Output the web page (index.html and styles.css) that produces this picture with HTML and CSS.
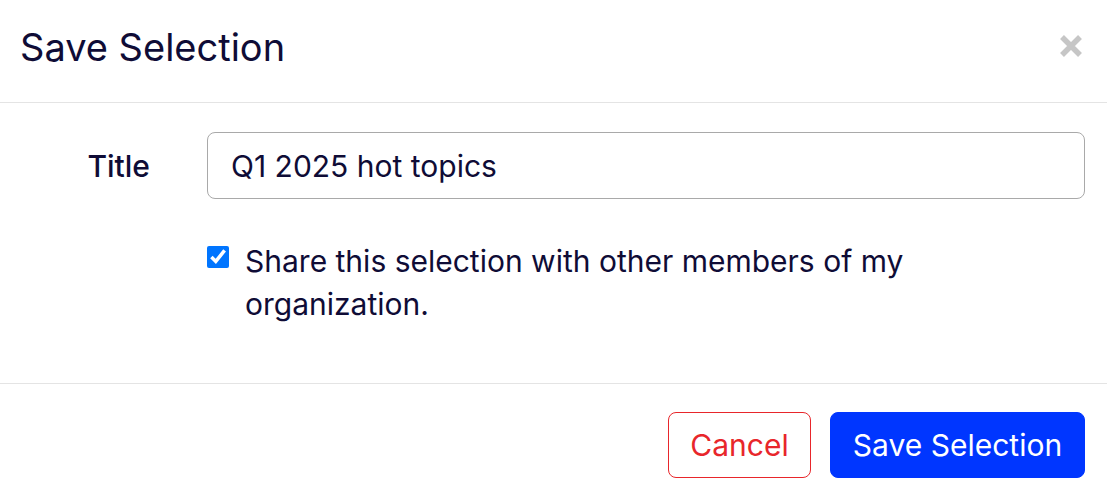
FILE: index.html
```html
<!DOCTYPE html>
<html>
<head>
<meta charset="utf-8">
<link rel="stylesheet" href="styles.css">
</head>
<body>
<div class="modal">
  <div class="modal-header">
    <h4 class="modal-title">Save Selection</h4>
    <button class="close" aria-label="Close">
      <svg width="24" height="24" viewBox="0 0 24 24"><path d="M3 3 L21 21 M21 3 L3 21" stroke="#c6c6c6" stroke-width="5.5" fill="none"/></svg>
    </button>
  </div>
  <div class="modal-body">
    <div class="form-row">
      <label class="form-label">Title</label>
      <input class="form-input" type="text" value="Q1 2025 hot topics">
    </div>
    <div class="check-row">
      <input class="check" type="checkbox" checked>
      <span class="check-label">Share this selection with other members of my organization.</span>
    </div>
  </div>
  <div class="modal-footer">
    <button class="btn btn-cancel">Cancel</button>
    <button class="btn btn-primary">Save Selection</button>
  </div>
</div>
</body>
</html>
```
FILE: styles.css
```css
html, body {
  margin: 0;
  padding: 0;
  background: #fff;
}
body {
  font-family: Inter, "Noto Sans", sans-serif;
  color: #0f0c36;
}
.modal {
  width: 1107px;
  height: 494px;
  overflow: hidden;
  display: flex;
  flex-direction: column;
}
.modal-header {
  height: 103px;
  border-bottom: 1px solid #e4e4e4;
  display: flex;
  align-items: center;
  justify-content: space-between;
  padding: 0 24px 0 20px;
  box-sizing: border-box;
}
.modal-title {
  margin: 0 0 8px 0;
  font-size: 38px;
  font-weight: 400;
  line-height: 1;
}
.close {
  background: none;
  border: 0;
  padding: 0;
  margin-bottom: 10px;
  display: flex;
}
.modal-body {
  padding: 29px 22px 57px 22px;
  border-bottom: 1px solid #e4e4e4;
}
.form-row {
  display: grid;
  grid-template-columns: 185px 1fr;
  align-items: center;
}
.form-label {
  text-align: right;
  padding-right: 57px;
  font-size: 30px;
  font-weight: 500;
}
.form-input {
  height: 67px;
  box-sizing: border-box;
  border: 1px solid #a9a9a9;
  border-radius: 8px;
  padding: 0 23px;
  font-family: inherit;
  font-size: 30px;
  color: #0f0c36;
  outline: none;
}
.check-row {
  display: flex;
  align-items: flex-start;
  margin: 41px 0 0 185px;
}
.check {
  width: 22px;
  height: 22px;
  margin: 6px 16px 0 0;
  flex: none;
}
.check-label {
  font-size: 30px;
  line-height: 43px;
  max-width: 700px;
}
.modal-footer {
  display: flex;
  justify-content: flex-end;
  gap: 19px;
  padding: 28px 22px 0 22px;
}
.btn {
  height: 66px;
  border-radius: 8px;
  font-family: inherit;
  font-size: 30px;
  padding: 0;
  cursor: pointer;
}
.btn-cancel {
  background: #fff;
  border: 1px solid #e8262b;
  color: #e8262b;
  width: 143px;
}
.btn-primary {
  background: #0036ff;
  border: 1px solid #0036ff;
  color: #fff;
  width: 255px;
}
```
